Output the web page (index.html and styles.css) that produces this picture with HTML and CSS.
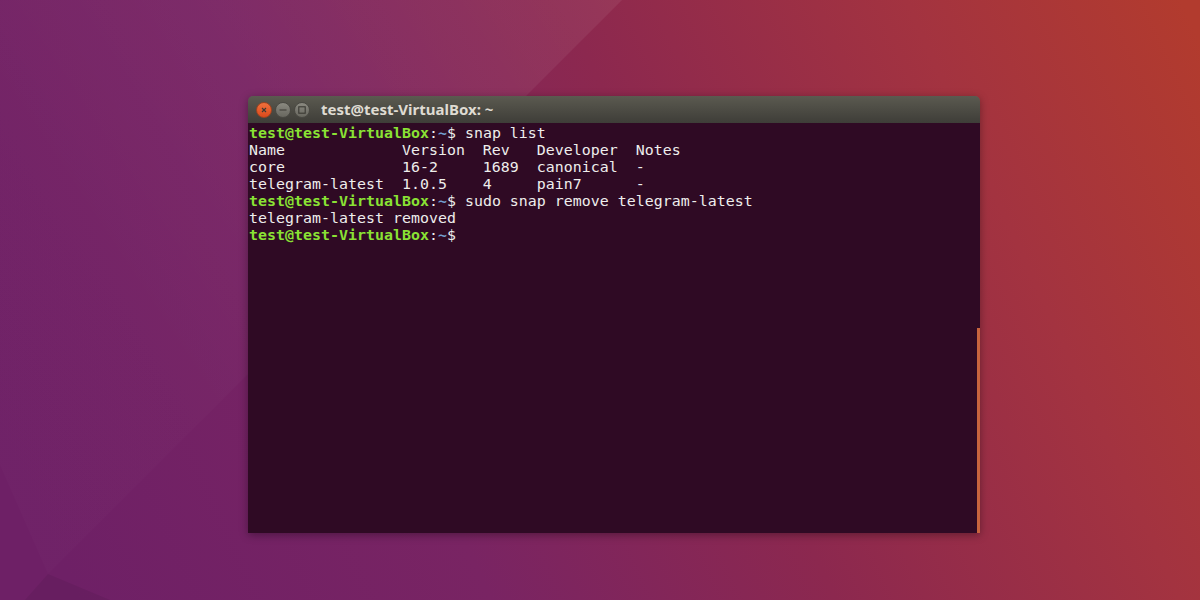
FILE: index.html
```html
<!DOCTYPE html>
<html lang="en">
<head>
<meta charset="utf-8">
<title>Terminal</title>
<link rel="stylesheet" href="styles.css">
</head>
<body>
<svg class="wallpaper" viewBox="0 0 1200 600" preserveAspectRatio="none" aria-hidden="true">
  <defs>
    <linearGradient id="wall" gradientUnits="userSpaceOnUse" x1="60" y1="560" x2="1200" y2="40">
      <stop offset="0" stop-color="#6e2066"/>
      <stop offset="0.3" stop-color="#792463"/>
      <stop offset="0.55" stop-color="#8c284f"/>
      <stop offset="0.8" stop-color="#a33340"/>
      <stop offset="1" stop-color="#b23b2e"/>
    </linearGradient>
    <linearGradient id="sheen" gradientUnits="userSpaceOnUse" x1="120" y1="330" x2="620" y2="0">
      <stop offset="0" stop-color="#fff" stop-opacity="0.012"/>
      <stop offset="1" stop-color="#fff" stop-opacity="0.065"/>
    </linearGradient>
  </defs>
  <rect width="1200" height="600" fill="url(#wall)"/>
  <polygon points="0,0 622,0 48,574 0,465" fill="url(#sheen)"/>
  <polygon points="48,574 110,600 25,600" fill="#000" fill-opacity="0.06"/>
</svg>
<main class="desktop">
  <section class="window">
    <header class="titlebar">
      <div class="controls">
        <span class="btn btn-close"><svg viewBox="0 0 8 8"><path d="M2 2l4 4M6 2l-4 4"/></svg></span>
        <span class="btn"><svg viewBox="0 0 8 8"><path d="M0.5 4h7"/></svg></span>
        <span class="btn"><svg viewBox="0 0 8 8"><rect x="0.8" y="0.8" width="6.4" height="6.4"/></svg></span>
      </div>
      <h1 class="title">test@test-VirtualBox: ~</h1>
    </header>
    <div class="terminal">
      <pre class="output"><span class="user">test@test-VirtualBox</span>:<span class="path">~</span>$ snap list
Name             Version  Rev   Developer  Notes
core             16-2     1689  canonical  -
telegram-latest  1.0.5    4     pain7      -
<span class="user">test@test-VirtualBox</span>:<span class="path">~</span>$ sudo snap remove telegram-latest
telegram-latest removed
<span class="user">test@test-VirtualBox</span>:<span class="path">~</span>$</pre>
      <div class="scrollbar"></div>
    </div>
  </section>
</main>
</body>
</html>
```
FILE: styles.css
```css
* { box-sizing: border-box; }
html, body { margin: 0; height: 100%; overflow: hidden; }
body { position: relative; background: #7f2660; }
.wallpaper { position: absolute; inset: 0; width: 100%; height: 100%; display: block; }
.desktop { position: relative; height: 100%; padding: 96px 220px 0 248px; }
.window { width: 732px; height: 437px; display: flex; flex-direction: column; border-radius: 5px 5px 0 0; overflow: hidden; box-shadow: 0 2px 8px rgba(0,0,0,.35); }
.titlebar { height: 27px; flex: none; display: flex; align-items: center; padding-left: 8px; background: linear-gradient(#5b5a50, #3e3d38); }
.controls { display: flex; gap: 3px; }
.btn { width: 16px; height: 16px; border-radius: 50%; display: flex; align-items: center; justify-content: center; background: linear-gradient(#8a8980, #68675f); border: 1px solid #4a4943; }
.btn svg { width: 8px; height: 8px; fill: none; stroke: #3a3933; stroke-width: 1.1; }
.btn-close { background: linear-gradient(#f0703c, #dc4a1c); border-color: #a0431f; }
.title { margin: 0 0 0 11px; font: 700 15px/1 "Noto Sans", "Open Sans", sans-serif; color: #dfdbd2; }
.terminal { flex: 1; display: flex; background: #2f0a24; }
.output { flex: 1; margin: 0; padding: 2px 0 0 1px; font: 14.9px/17px "DejaVu Sans Mono", monospace; letter-spacing: 0.03px; color: #eeeeec; }
.user { color: #8ae234; font-weight: 700; }
.path { color: #729fcf; font-weight: 700; }
.scrollbar { width: 3px; margin-top: 205px; background: #c7643e; flex: none; }
```
